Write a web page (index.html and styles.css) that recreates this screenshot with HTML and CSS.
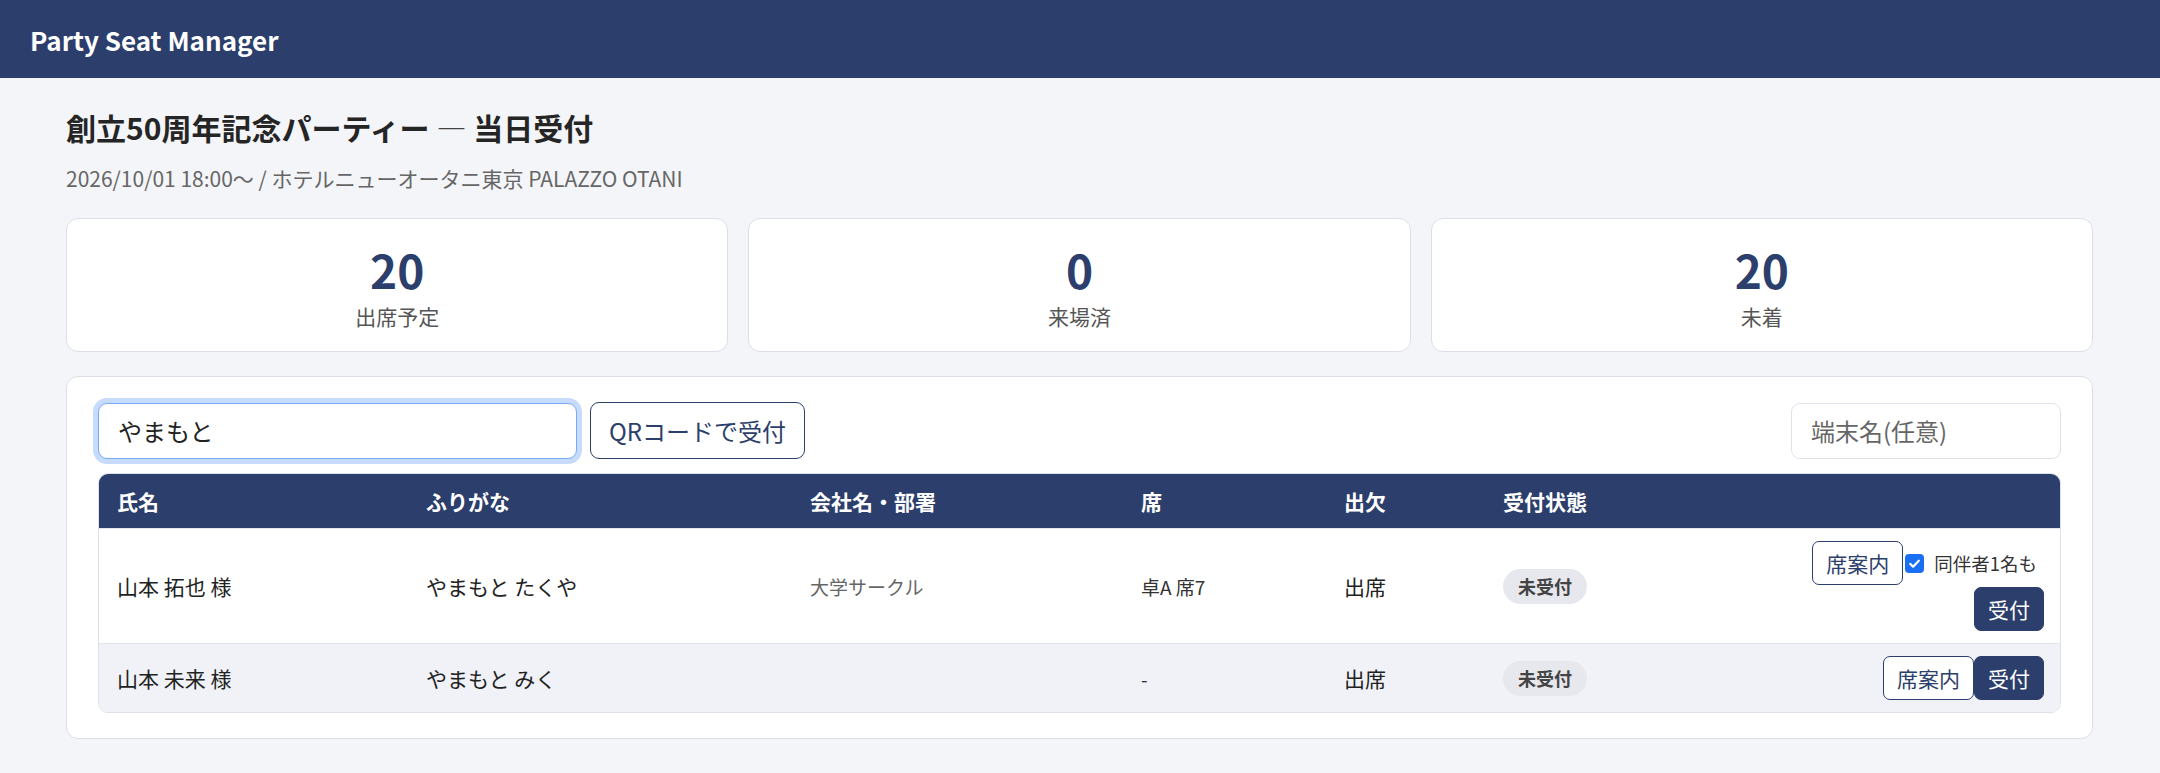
FILE: index.html
```html
<!DOCTYPE html>
<html lang="ja">
<head>
    <meta charset="UTF-8">
    <title>Party Seat Manager</title>
    <link rel="stylesheet" href="styles.css">
</head>
<body>
<header class="topbar">
    <div class="brand">Party Seat Manager</div>
</header>

<main class="page">
    <h1 class="event-title">創立50周年記念パーティー <span class="dash">—</span> 当日受付</h1>
    <p class="event-meta">2026/10/01 18:00〜 / ホテルニューオータニ東京 PALAZZO OTANI</p>

    <section class="stats">
        <div class="stat-card">
            <div class="stat-num">20</div>
            <div class="stat-label">出席予定</div>
        </div>
        <div class="stat-card">
            <div class="stat-num">0</div>
            <div class="stat-label">来場済</div>
        </div>
        <div class="stat-card">
            <div class="stat-num">20</div>
            <div class="stat-label">未着</div>
        </div>
    </section>

    <section class="panel">
        <div class="toolbar">
            <input class="search-input" type="text" value="やまもと">
            <button class="btn-qr">QRコードで受付</button>
            <input class="terminal-input" type="text" placeholder="端末名(任意)">
        </div>

        <div class="table-wrap">
            <table class="guest-table">
                <colgroup>
                    <col class="c-name">
                    <col class="c-kana">
                    <col class="c-org">
                    <col class="c-seat">
                    <col class="c-att">
                    <col class="c-status">
                    <col class="c-actions">
                </colgroup>
                <thead>
                <tr>
                    <th>氏名</th>
                    <th>ふりがな</th>
                    <th>会社名・部署</th>
                    <th>席</th>
                    <th>出欠</th>
                    <th>受付状態</th>
                    <th></th>
                </tr>
                </thead>
                <tbody>
                <tr>
                    <td>山本 拓也 様</td>
                    <td>やまもと たくや</td>
                    <td class="org">大学サークル</td>
                    <td class="seat">卓A 席7</td>
                    <td>出席</td>
                    <td><span class="pill">未受付</span></td>
                    <td class="action-cell">
                        <div class="actions">
                            <button class="btn-outline">席案内</button>
                            <label class="companion">
                                <!-- チェック済みのボックス -->
                                <svg class="check" width="19" height="19" viewBox="0 0 19 19">
                                    <rect x="0" y="0" width="19" height="19" rx="4" fill="#1a6ff2"/>
                                    <path d="M5.2 9.9l2.9 2.8 5.7-6" fill="none" stroke="#fff" stroke-width="2.2" stroke-linecap="round" stroke-linejoin="round"/>
                                </svg>同伴者1名も</label>
                            <button class="btn-primary">受付</button>
                        </div>
                    </td>
                </tr>
                <tr>
                    <td>山本 未来 様</td>
                    <td>やまもと みく</td>
                    <td class="org"></td>
                    <td class="seat">-</td>
                    <td>出席</td>
                    <td><span class="pill">未受付</span></td>
                    <td class="action-cell">
                        <div class="actions">
                            <button class="btn-outline">席案内</button>
                            <button class="btn-primary">受付</button>
                        </div>
                    </td>
                </tr>
                </tbody>
            </table>
        </div>
    </section>
</main>
</body>
</html>
```

FILE: styles.css
```css
body {
    margin: 0;
    background-color: #f4f5f9;
    color: #222;
    font-family: "Noto Sans CJK JP", "Noto Sans", sans-serif;
}

.topbar {
    height: 78px;
    background-color: #2c3e6b;
    display: flex;
    align-items: center;
    padding: 0 30px;
}

.brand {
    color: #fff;
    font-size: 26px;
    font-weight: bold;
}

.page {
    padding: 0 67px 0 66px;
}

.event-title {
    margin: 28px 0 0;
    font-size: 30px;
    line-height: 42px;
    font-weight: bold;
    color: #252525;
}

.event-title .dash {
    font-weight: normal;
    color: #444;
}

.event-meta {
    margin: 14px 0 0;
    font-size: 21px;
    line-height: 32px;
    color: #666;
}

/* 集計カード */
.stats {
    display: grid;
    grid-template-columns: repeat(3, 1fr);
    gap: 20px;
    margin-top: 24px;
}

.stat-card {
    background-color: #fff;
    border: 1px solid #dcdfe8;
    border-radius: 12px;
    height: 134px;
    box-sizing: border-box;
    display: flex;
    flex-direction: column;
    align-items: center;
    padding-top: 23px;
}

.stat-num {
    font-size: 46px;
    font-weight: bold;
    line-height: 54px;
    color: #2c3e6b;
}

.stat-label {
    margin-top: 4px;
    font-size: 21px;
    line-height: 32px;
    color: #555;
}

/* 受付パネル */
.panel {
    margin-top: 24px;
    background-color: #fff;
    border: 1px solid #dcdfe8;
    border-radius: 12px;
    padding: 25px 31px 25px 31px;
}

.toolbar {
    display: flex;
    align-items: center;
    gap: 13px;
    margin-bottom: 14px;
}

.search-input,
.terminal-input {
    height: 56px;
    box-sizing: border-box;
    border-radius: 9px;
    padding: 0 19px;
    font-family: inherit;
    font-size: 24px;
    color: #222;
    background-color: #fff;
    outline: none;
}

.search-input {
    width: 479px;
    border: 1.5px solid #78a8f6;
    box-shadow: 0 0 0 5px #c6dbfd;
}

.terminal-input {
    width: 270px;
    margin-left: auto;
    border: 1.5px solid #dfe2ea;
}

.terminal-input::placeholder {
    color: #666;
}

.btn-qr {
    height: 57px;
    padding: 0 18px;
    border: 1.5px solid #2c3e6b;
    border-radius: 9px;
    background-color: #fff;
    color: #2c3e6b;
    font-family: inherit;
    font-size: 24px;
}

.table-wrap {
    border: 1px solid #dde1ea;
    border-radius: 10px;
    overflow: hidden;
}

.guest-table {
    width: 100%;
    border-collapse: collapse;
    table-layout: fixed;
}

.c-name { width: 309px; }
.c-kana { width: 384px; }
.c-org { width: 331px; }
.c-seat { width: 203px; }
.c-att { width: 159px; }
.c-status { width: 274px; }

.guest-table th {
    background-color: #2c3e6b;
    color: #fff;
    font-size: 21px;
    font-weight: bold;
    text-align: left;
    height: 54px;
    padding: 0 18px;
}

.guest-table td {
    padding: 12px 18px;
    font-size: 21px;
    vertical-align: middle;
    border-top: 1px solid #e2e5ed;
}

.guest-table td.action-cell {
    padding-right: 16px;
}

.guest-table tbody tr:nth-child(even) {
    background-color: #f0f2f7;
}

.guest-table td.org {
    font-size: 19px;
    color: #666;
}

.guest-table td.seat {
    font-size: 19px;
    color: #333;
}

.pill {
    display: inline-block;
    padding: 4px 15px;
    border-radius: 20px;
    background-color: #e6e8ee;
    color: #444;
    font-size: 18px;
    line-height: 27px;
    font-weight: 600;
}

.actions {
    display: flex;
    flex-wrap: wrap;
    justify-content: flex-end;
    align-items: center;
    row-gap: 2px;
}

.btn-outline,
.btn-primary {
    font-family: inherit;
    font-size: 21px;
    line-height: 30px;
    padding: 6px 13px;
    border: 1.5px solid #2c3e6b;
    border-radius: 7px;
    cursor: pointer;
}

.btn-outline {
    background-color: #fff;
    color: #2c3e6b;
}

.btn-primary {
    background-color: #2c3e6b;
    color: #fff;
}

.companion {
    display: inline-flex;
    align-items: center;
    margin-right: 7px;
    font-size: 18.5px;
    color: #333;
}

.companion .check {
    margin: 0 10px 0 2px;
}
```
